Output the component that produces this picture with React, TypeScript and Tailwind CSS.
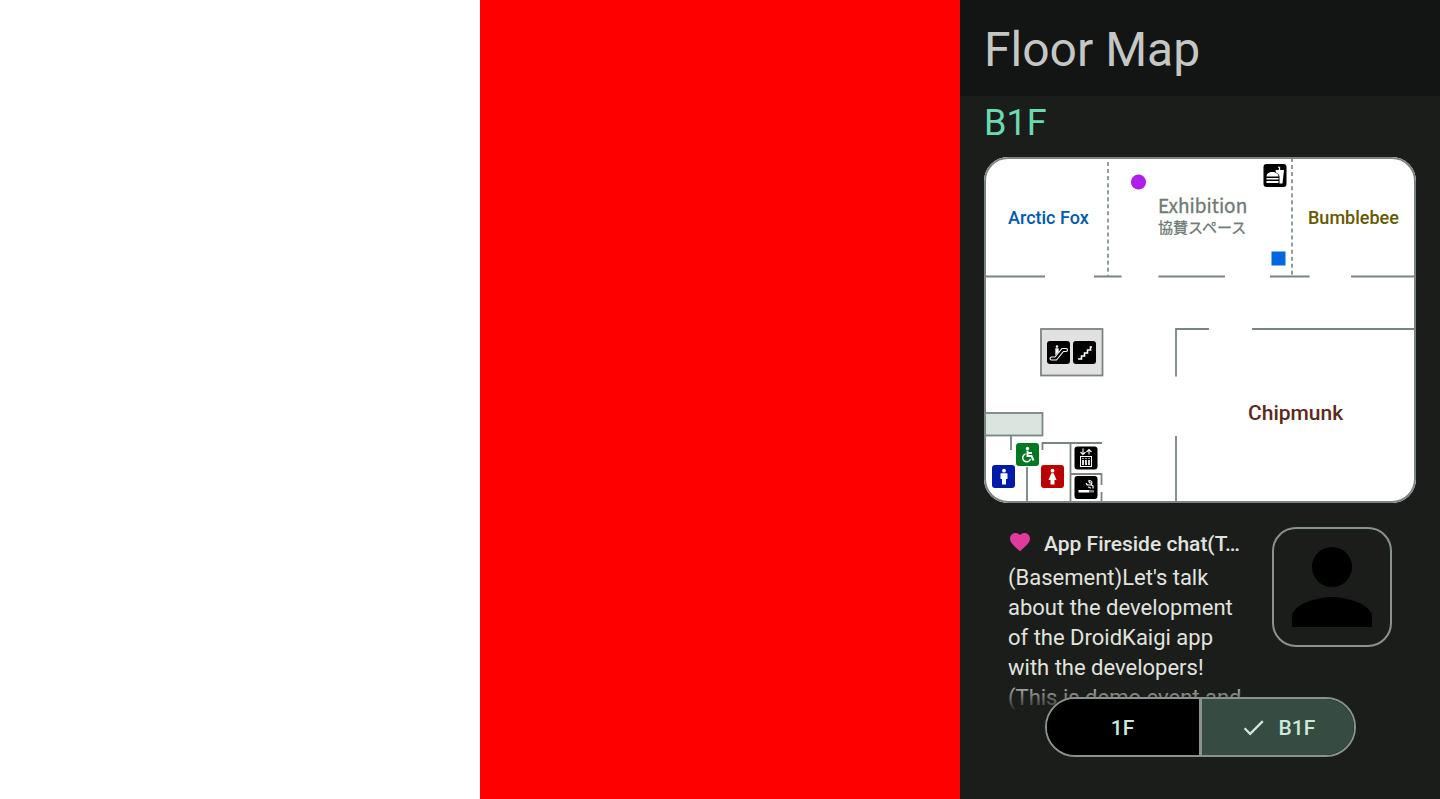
import React, { useState, type ReactNode } from "react";

const WALL = "#7a8480";

const walls = [
  "M0 119.500H61M110 119.500H137.500M174.500 119.500H241M286 119.500H325.500M367 119.500H432",
  "M192 219.500V172H225M268 172H432",
  "M192 279V346",
  "M27 279V293M58.500 293V286H118M43 310V346M86.500 286V346M86.500 317H117.500V328M117.500 335V346",
];

function Tile({ x, y, fill, children }: { x: number; y: number; fill: string; children: ReactNode }) {
  return (
    <g transform={`translate(${x} ${y})`}>
      <rect width="23" height="23" rx="3" fill={fill} />
      {children}
    </g>
  );
}

function MapDrawing() {
  return (
    <svg viewBox="0 0 432 346" className="block w-full" role="img" aria-label="B1F map">
      <rect width="432" height="346" fill="#fff" />
      <rect x="57" y="172" width="61.500" height="46.500" fill="#e1e1e1" stroke={WALL} strokeWidth="1.800" />
      <rect x="-2" y="256" width="60.500" height="22.500" fill="#dbe5df" stroke={WALL} strokeWidth="1.800" />
      {walls.map((d) => (
        <path key={d} d={d} fill="none" stroke={WALL} strokeWidth="1.8" />
      ))}
      <path d="M124 5V119M308 1V119" fill="none" stroke={WALL} strokeWidth="1.6" strokeDasharray="4 3.05" />
      <circle cx="154.500" cy="25" r="7.600" fill="#ad1fea" />
      <rect x="287.500" y="94.500" width="14" height="14" fill="#0067de" />

      <g className="font-[Roboto,sans-serif] font-medium">
        <text x="24" y="67" fontSize="18" fill="#0059b0">Arctic Fox</text>
        <text x="324" y="67" fontSize="18" fill="#645a00">Bumblebee</text>
        <text x="264" y="263" fontSize="21" fill="#5b2a1e">Chipmunk</text>
      </g>
      <g className="font-['Noto_Sans_CJK_JP',sans-serif]" fill="#6f7975" stroke="#6f7975" strokeWidth="0.300">
        <text x="174" y="56" fontSize="19">Exhibition</text>
        <text x="174" y="76" fontSize="15">協賛スペース</text>
      </g>

      <Tile x={279.5} y={7} fill="#000">
        <path d="M3 12.500C3 6.500 15 6.500 15 12.500ZM3 14H15V15.500H3ZM3 17H15V19H3Z" fill="#fff" />
        <path d="M12 6H20.500L19 19.500H16V12Q15.500 9.500 12.500 8.500Z" fill="#fff" />
        <path d="M16 7V3.500L14.500 3" fill="none" stroke="#fff" strokeWidth="1.300" />
      </Tile>

      <Tile x={63} y={184} fill="#000">
        <path d="M4 16H8L15 7.500H19Q20.500 7.500 20.500 9Q20.500 10.500 19 10.500H16.500L9.500 19H4.500Q3 19 3 17.500Q3 16 4.500 16Z" fill="none" stroke="#fff" strokeWidth="1.100" />
        <circle cx="10" cy="5.500" r="1.200" fill="#fff" />
        <path d="M8.300 7.300H11.700V10.500L8.300 14.500Z" fill="#fff" />
      </Tile>
      <Tile x={89} y={184} fill="#000">
        <path d="M5 18H8.500V15H11.500V12H14.500V9H17.500V6H19" fill="none" stroke="#fff" strokeWidth="1.600" />
      </Tile>

      <Tile x={32} y={286} fill="#007920">
        <circle cx="11.500" cy="5.500" r="1.700" fill="#fff" />
        <path d="M11.500 7.500V13H15.500L17.500 17.500M11.500 10H16" fill="none" stroke="#fff" strokeWidth="2" />
        <path d="M9.500 11A4 4 0 1 0 14.500 16" fill="none" stroke="#fff" strokeWidth="1.500" />
      </Tile>
      <Tile x={8} y={308} fill="#001ba8">
        <circle cx="12" cy="5.700" r="1.900" fill="#fff" />
        <path d="M9 8.200H15Q15.500 8.200 15.500 9V14H14V19.500H10V14H8.500V9Q8.500 8.200 9 8.200Z" fill="#fff" />
      </Tile>
      <Tile x={57} y={308} fill="#ba0000">
        <circle cx="11.500" cy="5.700" r="1.900" fill="#fff" />
        <path d="M10.300 8.200H12.700L15.500 15H13.500V19.500H9.500V15H7.500Z" fill="#fff" />
      </Tile>

      <Tile x={90.5} y={289.5} fill="#000">
        <rect x="6" y="10" width="11" height="10" fill="none" stroke="#fff" strokeWidth="1" />
        <path d="M8.500 13.500V18.500M11.500 13.500V18.500M14.500 13.500V18.500" stroke="#fff" strokeWidth="1.700" />
        <path d="M8.500 11.500V12.500M11.500 11.500V12.500M14.500 11.500V12.500" stroke="#fff" strokeWidth="1.200" />
        <path d="M8.500 2V7.500M6 5.500L8.500 8L11 5.500M14.500 8V3M12 5.500L14.500 3L17 5.500" fill="none" stroke="#fff" strokeWidth="1.100" />
      </Tile>
      <Tile x={90.5} y={319} fill="#000">
        <path d="M4 14H15V16.500H4ZM16 14H17V16.500H16ZM18 14H19V16.500H18Z" fill="#fff" />
        <path d="M18.500 12.500V10Q18.500 9 16.500 9H14Q11.500 9 12 7M16.500 9Q19 5 14.500 4.500Q14 7 16.500 7M16 12.500Q16 11 13.500 11" fill="none" stroke="#fff" strokeWidth="1.200" />
      </Tile>
    </svg>
  );
}

function Heart() {
  return (
    <svg viewBox="0 0 24 24" className="size-6 shrink-0" fill="#df3a9c" aria-hidden="true">
      <path d="m12 21.350-1.450-1.320C5.400 15.360 2 12.280 2 8.500 2 5.420 4.420 3 7.500 3c1.740 0 3.410.81 4.500 2.090C13.090 3.810 14.760 3 16.500 3 19.580 3 22 5.420 22 8.500c0 3.780-3.400 6.860-8.550 11.540z" />
    </svg>
  );
}

function Avatar() {
  return (
    <div className="size-[120px] shrink-0 overflow-hidden rounded-3xl border-2 border-[#89938e]">
      <svg viewBox="2 2 116 116" className="size-full" aria-hidden="true">
        <circle cx="60" cy="40" r="20" />
        <path d="M60 70C46.650 70 20 76.700 20 90V100H100V90C100 76.700 73.350 70 60 70Z" />
      </svg>
    </div>
  );
}

const floors = ["1F", "B1F"];

function FloorSwitch({ floor, onChange }: { floor: string; onChange: (floor: string) => void }) {
  return (
    <div
      role="group"
      aria-label="Floor"
      className="absolute inset-x-0 bottom-[42px] mx-auto flex h-[60px] w-[311px] divide-x-3 divide-[#89938e] overflow-hidden rounded-full border-2 border-[#89938e] bg-black"
    >
      {floors.map((name) => {
        const selected = name === floor;
        return (
          <button
            key={name}
            type="button"
            aria-pressed={selected}
            onClick={() => onChange(name)}
            className={`flex flex-1 items-center justify-center gap-3 pt-1 text-[21px] font-medium text-[#cde9db] ${selected ? "bg-[#364b41]" : "bg-black"}`}
          >
            {selected && (
              <svg viewBox="0 0 24 24" className="-mt-1 size-[27px]" fill="currentColor" aria-hidden="true">
                <path d="M9 16.170 4.830 12l-1.420 1.410L9 19 21 7l-1.410-1.410z" />
              </svg>
            )}
            {name}
          </button>
        );
      })}
    </div>
  );
}

export default function App() {
  const [floor, setFloor] = useState("B1F");
  return (
    <div className="grid h-screen grid-cols-3 font-[Roboto,'Noto_Sans_CJK_JP',sans-serif]">
      <div className="bg-white" />
      <div className="bg-[#ff0000]" />
      <main className="relative flex min-h-0 flex-col overflow-hidden bg-[#1b1d1b]">
        <header className="flex h-24 shrink-0 items-center bg-[#131514] px-6 pt-1">
          <h1 className="text-5xl text-[#c5c7c4]">Floor Map</h1>
        </header>
        <div className="min-h-0 flex-1 overflow-hidden px-6 pt-[3px]">
          <h2 className="text-4xl leading-[48px] text-[#69dbb1]">{floor}</h2>
          <div className="relative mt-[10px] overflow-hidden rounded-3xl">
            <MapDrawing />
            <div className="pointer-events-none absolute inset-0 rounded-3xl border-2 border-[#7a8480]" />
          </div>
          <article className="mt-6 flex gap-6 px-6 text-[#e1e3df]">
            <div className="min-w-0 flex-1">
              <h3 className="flex h-[30px] items-center gap-3 text-[21px] leading-[30px] font-medium">
                <Heart />
                <span className="truncate pt-[3px]">App Fireside chat(T…</span>
              </h3>
              <p className="mt-[6px] text-[22px] leading-[30px]">
                (Basement)Let's talk about the development of the DroidKaigi app with the developers! (This is demo event and
              </p>
            </div>
            <Avatar />
          </article>
        </div>
        <div className="pointer-events-none absolute inset-x-0 bottom-0 h-[122px] bg-linear-to-b from-transparent to-[#1b1d1b] to-30%" />
        <FloorSwitch floor={floor} onChange={setFloor} />
      </main>
    </div>
  );
}
